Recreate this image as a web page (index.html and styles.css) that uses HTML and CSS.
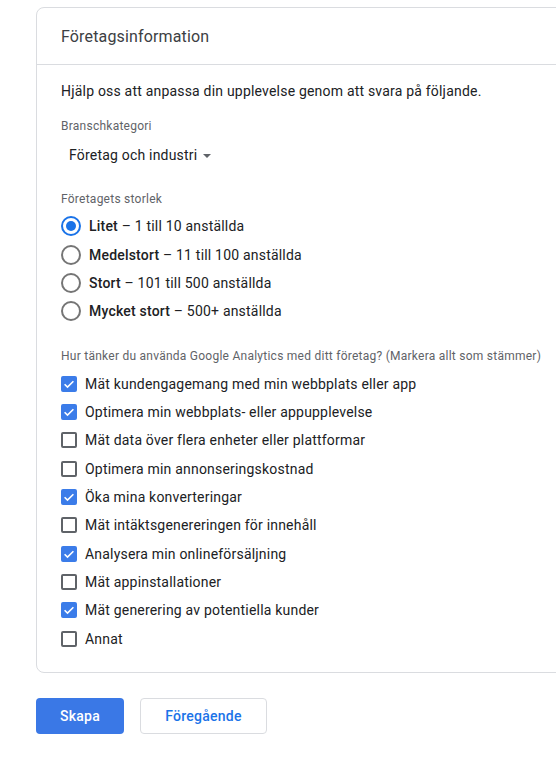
FILE: index.html
```html
<!DOCTYPE html>
<html lang="sv">
<head>
<meta charset="utf-8">
<title>Företagsinformation</title>
<link rel="stylesheet" href="styles.css">
</head>
<body>
<div class="page">
  <section class="card">
    <header class="card-header">Företagsinformation</header>
    <div class="card-body">
      <p class="intro">Hjälp oss att anpassa din upplevelse genom att svara på följande.</p>

      <div class="label">Branschkategori</div>
      <button class="dropdown">Företag och industri <span class="caret"></span></button>

      <div class="label label-size">Företagets storlek</div>
      <ul class="options">
        <li class="row"><span class="radio checked"></span><span class="text"><b>Litet</b> – 1 till 10 anställda</span></li>
        <li class="row"><span class="radio"></span><span class="text"><b>Medelstort</b> – 11 till 100 anställda</span></li>
        <li class="row"><span class="radio"></span><span class="text"><b>Stort</b> – 101 till 500 anställda</span></li>
        <li class="row"><span class="radio"></span><span class="text"><b>Mycket stort</b> – 500+ anställda</span></li>
      </ul>

      <div class="label label-use">Hur tänker du använda Google Analytics med ditt företag? (Markera allt som stämmer)</div>
      <ul class="options checks">
        <li class="row"><span class="box checked"><svg viewBox="0 0 16 16"><path d="M3.6 8.2l2.9 2.9 5.9-5.9" /></svg></span><span class="text">Mät kundengagemang med min webbplats eller app</span></li>
        <li class="row"><span class="box checked"><svg viewBox="0 0 16 16"><path d="M3.6 8.2l2.9 2.9 5.9-5.9" /></svg></span><span class="text">Optimera min webbplats- eller appupplevelse</span></li>
        <li class="row"><span class="box"></span><span class="text">Mät data över flera enheter eller plattformar</span></li>
        <li class="row"><span class="box"></span><span class="text">Optimera min annonseringskostnad</span></li>
        <li class="row"><span class="box checked"><svg viewBox="0 0 16 16"><path d="M3.6 8.2l2.9 2.9 5.9-5.9" /></svg></span><span class="text">Öka mina konverteringar</span></li>
        <li class="row"><span class="box"></span><span class="text">Mät intäktsgenereringen för innehåll</span></li>
        <li class="row"><span class="box checked"><svg viewBox="0 0 16 16"><path d="M3.6 8.2l2.9 2.9 5.9-5.9" /></svg></span><span class="text">Analysera min onlineförsäljning</span></li>
        <li class="row"><span class="box"></span><span class="text">Mät appinstallationer</span></li>
        <li class="row"><span class="box checked"><svg viewBox="0 0 16 16"><path d="M3.6 8.2l2.9 2.9 5.9-5.9" /></svg></span><span class="text">Mät generering av potentiella kunder</span></li>
        <li class="row"><span class="box"></span><span class="text">Annat</span></li>
      </ul>
    </div>
  </section>

  <div class="actions">
    <button class="btn btn-primary">Skapa</button>
    <button class="btn btn-secondary">Föregående</button>
  </div>
</div>
</body>
</html>
```

FILE: styles.css
```css
html, body {
  margin: 0;
  padding: 0;
  overflow: hidden;
  background: #ffffff;
}

body {
  font-family: Roboto, "Liberation Sans", Arial, sans-serif;
  color: #202124;
  font-size: 14px;
}

.page {
  padding: 7px 0 0 36px;
}

.card {
  width: 560px;
  border: 1px solid #dadce0;
  border-radius: 8px;
  box-sizing: border-box;
}

.card-header {
  height: 56px;
  display: flex;
  align-items: center;
  padding-left: 24px;
  font-size: 16px;
  letter-spacing: 0.15px;
  color: #3c4043;
  border-bottom: 1px solid #dadce0;
}

.card-body {
  padding: 16px 24px 19px 24px;
}

.intro {
  margin: 0;
  line-height: 20px;
  font-size: 14px;
  letter-spacing: 0.2px;
  color: #202124;
}

.label {
  font-size: 12px;
  line-height: 16px;
  letter-spacing: 0.25px;
  color: #5f6368;
  margin-top: 17px;
}

.label-size {
  margin-top: 22px;
}

.label-use {
  margin-top: 22px;
}

.dropdown {
  display: flex;
  align-items: center;
  margin-top: 7px;
  padding: 4px 8px;
  height: 28px;
  background: none;
  border: none;
  font-family: inherit;
  font-size: 14px;
  letter-spacing: 0.2px;
  color: #202124;
  cursor: pointer;
}

.caret {
  display: inline-block;
  width: 0;
  height: 0;
  margin-left: 6px;
  margin-top: 1px;
  border-left: 4px solid transparent;
  border-right: 4px solid transparent;
  border-top: 4px solid #5f6368;
}

.options {
  list-style: none;
  margin: 5px 0 0 0;
  padding: 0;
}

.checks {
  margin-top: 6px;
}

.row {
  display: flex;
  align-items: center;
  height: 28.4px;
}

.checks .row {
  height: 28.33px;
}

.text {
  line-height: 20px;
  letter-spacing: 0.2px;
}

.text b {
  font-weight: 500;
}

.radio {
  flex: none;
  width: 20px;
  height: 20px;
  box-sizing: border-box;
  border: 2px solid #757575;
  border-radius: 50%;
  margin-right: 8px;
  display: flex;
  align-items: center;
  justify-content: center;
}

.radio.checked {
  border-color: #1a73e8;
}

.radio.checked::after {
  content: "";
  width: 10px;
  height: 10px;
  border-radius: 50%;
  background: #1a73e8;
}

.box {
  flex: none;
  width: 16px;
  height: 16px;
  box-sizing: border-box;
  border: 2px solid #5f6368;
  border-radius: 2px;
  margin-right: 8px;
  position: relative;
}

.box.checked {
  background: #3b7ce9;
  border-color: #3b7ce9;
}

.box svg {
  position: absolute;
  left: -2px;
  top: -2px;
  width: 16px;
  height: 16px;
}

.box svg path {
  fill: none;
  stroke: #ffffff;
  stroke-width: 1.6;
}

.actions {
  display: flex;
  gap: 16px;
  margin-top: 25px;
}

.btn {
  height: 36px;
  border-radius: 4px;
  font-family: Roboto, "Liberation Sans", Arial, sans-serif;
  font-size: 14px;
  font-weight: 500;
  letter-spacing: 0.25px;
  cursor: pointer;
  box-sizing: border-box;
}

.btn-primary {
  width: 88px;
  background: #3a78e6;
  color: #ffffff;
  border: none;
}

.btn-secondary {
  width: 127px;
  background: #ffffff;
  color: #1a73e8;
  border: 1px solid #dadce0;
}
```
